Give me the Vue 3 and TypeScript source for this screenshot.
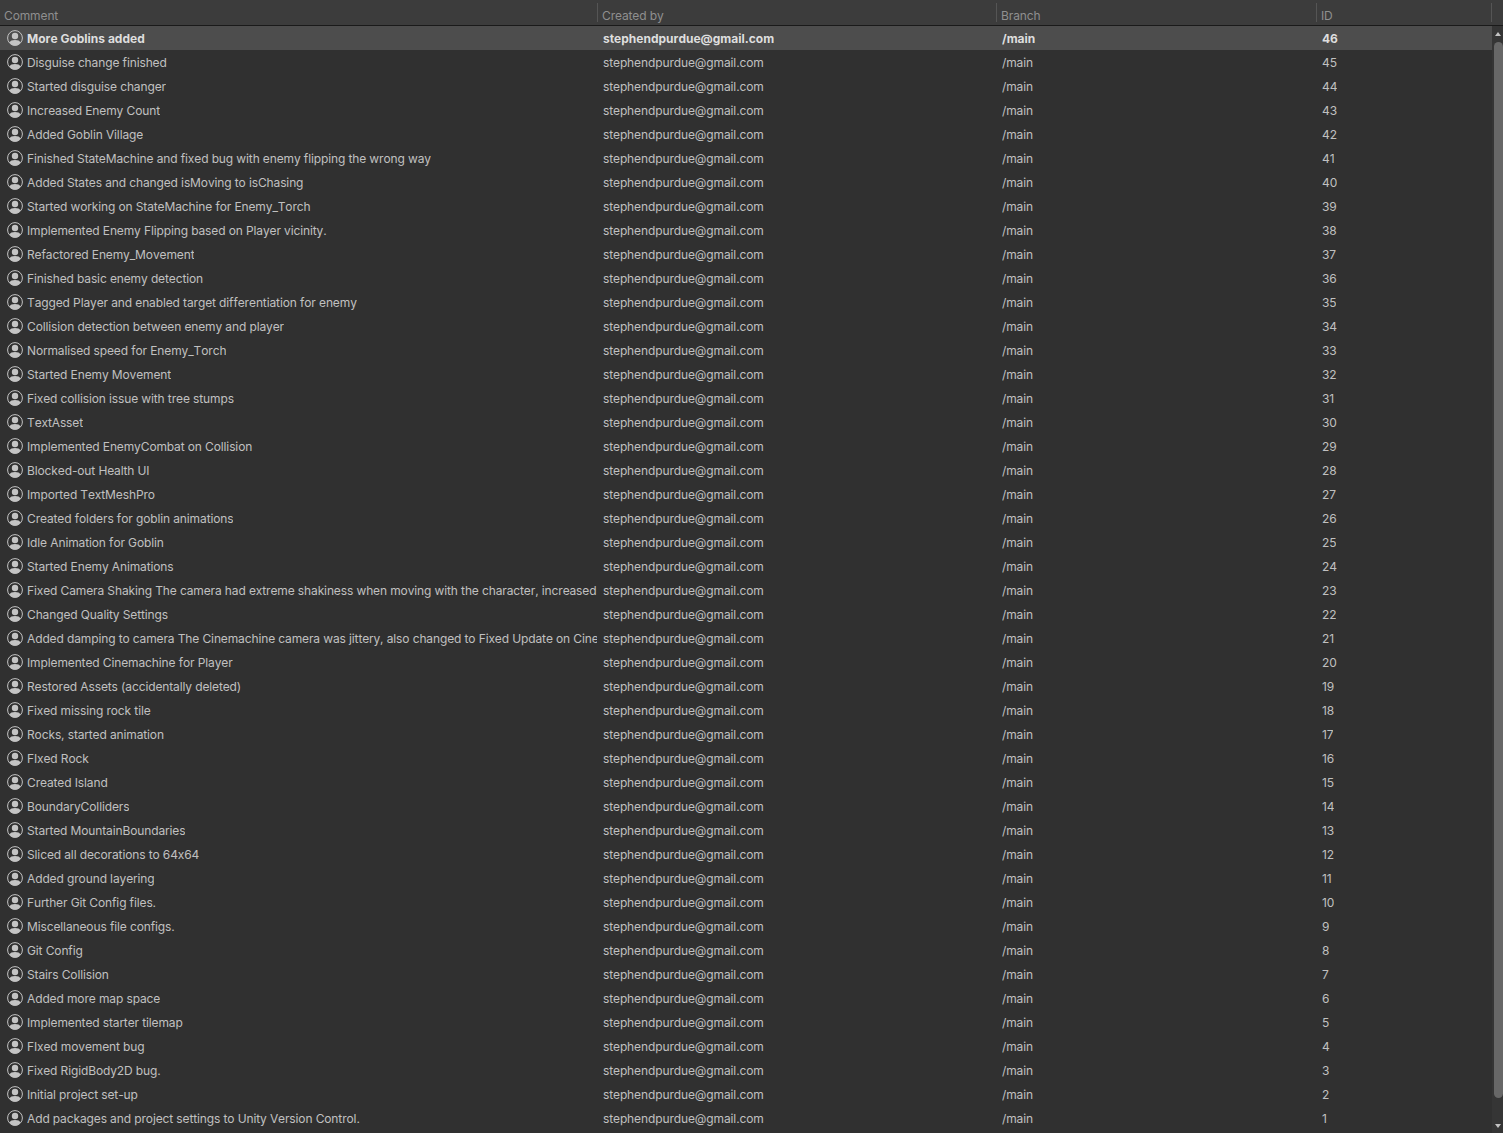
<script setup lang="ts">
interface Row { id: number; comment: string }
const comments: string[] = [
  'More Goblins added','Disguise change finished','Started disguise changer','Increased Enemy Count','Added Goblin Village',
  'Finished StateMachine and fixed bug with enemy flipping the wrong way','Added States and changed isMoving to isChasing',
  'Started working on StateMachine for Enemy_Torch','Implemented Enemy Flipping based on Player vicinity.','Refactored Enemy_Movement',
  'Finished basic enemy detection','Tagged Player and enabled target differentiation for enemy','Collision detection between enemy and player',
  'Normalised speed for Enemy_Torch','Started Enemy Movement','Fixed collision issue with tree stumps','TextAsset',
  'Implemented EnemyCombat on Collision','Blocked-out Health UI','Imported TextMeshPro','Created folders for goblin animations',
  'Idle Animation for Goblin','Started Enemy Animations',
  'Fixed Camera Shaking The camera had extreme shakiness when moving with the character, increased the damping values',
  'Changed Quality Settings',
  'Added damping to camera The Cinemachine camera was jittery, also changed to Fixed Update on Cinemachine Brain',
  'Implemented Cinemachine for Player','Restored Assets (accidentally deleted)','Fixed missing rock tile','Rocks, started animation',
  'FIxed Rock','Created Island','BoundaryColliders','Started MountainBoundaries','Sliced all decorations to 64x64','Added ground layering',
  'Further Git Config files.','Miscellaneous file configs.','Git Config','Stairs Collision','Added more map space',
  'Implemented starter tilemap','FIxed movement bug','Fixed RigidBody2D bug.','Initial project set-up',
  'Add packages and project settings to Unity Version Control.'
]
const rows: Row[] = comments.map((comment, i) => ({ id: 46 - i, comment }))
</script>

<template>
  <div class="window">
    <div class="table">
      <div class="head">
        <div class="hcell c1">Comment</div>
        <div class="hcell c2">Created by</div>
        <div class="hcell c3">Branch</div>
        <div class="hcell c4">ID</div>
        <div class="hcell c5"></div>
      </div>
      <div class="body">
        <div class="list">
          <div v-for="(r, i) in rows" :key="r.id" class="row" :class="{ selected: i === 0 }">
            <div class="cell c1">
              <svg class="avatar" width="16" height="16" viewBox="0 0 16 16">
                <circle cx="8" cy="8" r="7.4" fill="none" stroke="currentColor" stroke-width="1" />
                <circle cx="8" cy="6" r="3.2" fill="currentColor" />
                <path d="M2.4 12.4C3.2 10.7 5.2 9.9 8 9.9s4.8.8 5.6 2.5C12.4 14.4 10.4 15.6 8 15.6s-4.4-1.2-5.6-3.2z" fill="currentColor" />
              </svg>
              <span class="txt">{{ r.comment }}</span>
            </div>
            <div class="cell c2"><span class="txt">stephendpurdue@gmail.com</span></div>
            <div class="cell c3"><span class="txt">/main</span></div>
            <div class="cell c4"><span class="txt">{{ r.id }}</span></div>
          </div>
        </div>
        <div class="scrollbar">
          <div class="arrow up"></div>
          <div class="track"><div class="thumb"></div></div>
          <div class="arrow down"></div>
        </div>
      </div>
    </div>
  </div>
</template>

<style scoped>
.window {
  width: 1503px;
  height: 1133px;
  overflow: hidden;
  background: #303030;
  font-family: Inter, "Liberation Sans", sans-serif;
  font-size: 12px;
  font-feature-settings: "calt" 0;
  font-kerning: none;
  letter-spacing: -0.12px;
  color: #c0c0c0;
}
.table { display: flex; flex-direction: column; height: 100%; }
.head {
  display: flex;
  flex: none;
  height: 25px;
  box-sizing: content-box;
  background: #3c3c3c;
  border-bottom: 1px solid #1a1a1a;
}
.hcell {
  box-sizing: border-box;
  height: 25px;
  padding: 8px 0 0 5px;
  line-height: 15px;
  color: #8f8f8f;
  position: relative;
}
.hcell.c1 { padding-left: 4px; }
.hcell + .hcell::before {
  content: "";
  position: absolute;
  left: 0;
  top: 3px;
  bottom: 3px;
  width: 1px;
  background: #555;
}
.c1 { width: 597px; }
.c2 { width: 399px; }
.c3 { width: 320px; }
.c4 { width: 175px; }
.c5 { width: 12px; }
.body { display: flex; flex: 1; min-height: 0; }
.list { width: 1492px; flex: none; }
.row { display: flex; height: 24px; align-items: center; }
.row.selected { background: #4d4d4d; color: #dedede; font-weight: 700; letter-spacing: 0; }
.cell {
  box-sizing: border-box;
  height: 24px;
  display: flex;
  align-items: center;
  padding-left: 6px;
  overflow: hidden;
  white-space: nowrap;
}
.cell.c1 { padding-left: 7px; gap: 4px; }
.avatar { flex: none; color: #c4c4c4; }
.txt { display: block; white-space: nowrap; min-width: 0; overflow: hidden; }
.scrollbar {
  width: 11px;
  flex: none;
  background: #353535;
  display: flex;
  flex-direction: column;
}
.arrow { flex: none; width: 0; height: 0; margin-left: 3px; border-left: 3.5px solid transparent; border-right: 3.5px solid transparent; }
.arrow.up { border-bottom: 4px solid #c2c2c2; margin-top: 6px; }
.arrow.down { border-top: 4px solid #c2c2c2; margin-bottom: 5px; }
.track { flex: 1; width: 100%; display: flex; justify-content: flex-end; padding: 6px 0 26px; box-sizing: border-box; min-height: 0; }
.thumb { width: 9px; background: #676767; border-radius: 5px; }
</style>
